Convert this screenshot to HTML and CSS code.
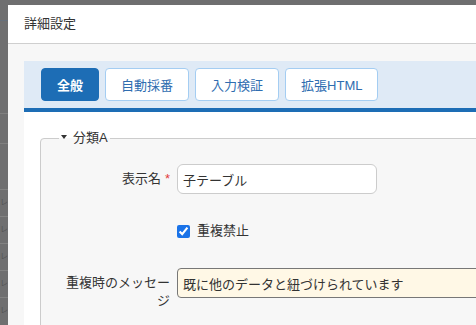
FILE: index.html
```html
<!DOCTYPE html>
<html lang="ja">
<head>
    <meta charset="UTF-8">
    <title>詳細設定</title>
    <link rel="stylesheet" href="styles.css">
</head>
<body>
    <!-- page under the dialog, dimmed -->
    <div class="backdrop">
        <div class="backdrop-head"></div>
        <div class="backdrop-line line-a"></div>
        <div class="backdrop-line line-b"></div>
        <div class="backdrop-rows">
            <div class="backdrop-row">レ</div>
            <div class="backdrop-row">レ</div>
            <div class="backdrop-row">レ</div>
            <div class="backdrop-row">レ</div>
            <div class="backdrop-row">レ</div>
        </div>
    </div>

    <div class="modal">
        <div class="modal-header">詳細設定</div>

        <div class="modal-body">
            <div class="tabs">
                <button class="tab active">全般</button>
                <button class="tab">自動採番</button>
                <button class="tab">入力検証</button>
                <button class="tab">拡張HTML</button>
            </div>

            <div class="tab-panel">
                <fieldset class="group">
                    <legend><span class="caret"></span>分類A</legend>

                    <div class="form-row">
                        <label class="form-label">表示名<span class="required">*</span></label>
                        <input type="text" class="text-input" value="子テーブル">
                    </div>

                    <div class="form-row check-row">
                        <span class="form-label"></span>
                        <label class="check">
                            <input type="checkbox" checked>
                            重複禁止
                        </label>
                    </div>

                    <div class="form-row">
                        <label class="form-label">重複時のメッセージ</label>
                        <input type="text" class="text-input message-input" value="既に他のデータと紐づけられています">
                    </div>
                </fieldset>
            </div>
        </div>
    </div>
</body>
</html>
```

FILE: styles.css
```css
body {
    margin: 0;
    font-family: "Liberation Sans", "Noto Sans CJK JP", sans-serif;
    font-size: 13px;
    color: #333;
    background-color: #6f6f70; /* dimmed page */
    overflow: hidden;
}

/* page under the overlay */
.backdrop {
    height: 325px;
}
.backdrop-head {
    height: 20px;
    border-bottom: 1px solid #66707c;
}
.backdrop-line {
    height: 1px;
    background-color: #808080;
}
.line-a {
    margin-top: 92px;
}
.line-b {
    margin-top: 29px;
}
.backdrop-rows {
    margin-top: 45px;
}
.backdrop-row {
    height: 26px;
    border-top: 1px solid #828282;
    line-height: 26px;
    font-size: 8px;
    color: #555;
}

/* dialog */
.modal {
    position: absolute;
    top: 5px;
    left: 8px;
    width: 560px;
    height: 400px;
    background-color: #f7f7f7;
}
.modal-header {
    height: 38px;
    line-height: 38px;
    padding: 0 16px;
    background-color: #fff;
    border-bottom: 1px solid #cfcfcf;
}
.modal-body {
    padding: 17px 16px 0;
}

.tabs {
    display: flex;
    gap: 6px;
    padding: 7px 17px;
    background-color: #dfeaf6;
    border-bottom: 4px solid #1d6db5;
}
.tab {
    height: 33px;
    padding: 0 15px;
    font-family: inherit;
    font-size: 13px;
    color: #2f6db0;
    background-color: #fff;
    border: 1px solid #a4cdf2;
    border-radius: 4px;
}
.tab.active {
    color: #fff;
    font-weight: bold;
    background-color: #1d6db5;
    border-color: #1d6db5;
}

.tab-panel {
    background-color: #fff;
    padding: 15px 16px;
    height: 300px;
}

.group {
    margin: 0;
    padding: 15px 16px 20px;
    border: 1px solid #cccccc;
    border-radius: 4px;
    background-color: #f7f7f7;
}
.group legend {
    margin-left: 2px;
    padding: 0 2px;
    line-height: 22px;
}
.caret {
    display: inline-block;
    vertical-align: middle;
    margin: 0 6px 3px 0;
    border-left: 3px solid transparent;
    border-right: 3px solid transparent;
    border-top: 4px solid #333;
}

.form-row {
    display: grid;
    grid-template-columns: 113px auto;
    column-gap: 7px;
    align-items: start;
    margin-bottom: 22px;
}
.form-label {
    text-align: right;
    padding-top: 6px;
    line-height: 18px;
}
.required {
    color: #e23b3b;
    margin-left: 4px;
}
.text-input {
    box-sizing: border-box;
    width: 200px;
    height: 30px;
    padding: 0 5px;
    font-family: inherit;
    font-size: 13px;
    color: #333;
    background-color: #fff;
    border: 1px solid #cccccc;
    border-radius: 6px;
}
.message-input {
    width: 420px;
    background-color: #fff8e6;
    border-color: #777;
    border-radius: 4px;
}

.check-row {
    align-items: center;
    height: 30px;
}
.check-row .form-label {
    padding-top: 0;
}
.check {
    display: flex;
    align-items: center;
    gap: 7px;
    line-height: 18px;
}
.check input {
    margin: 0;
    width: 13px;
    height: 13px;
    accent-color: #1a73e8;
}
```
